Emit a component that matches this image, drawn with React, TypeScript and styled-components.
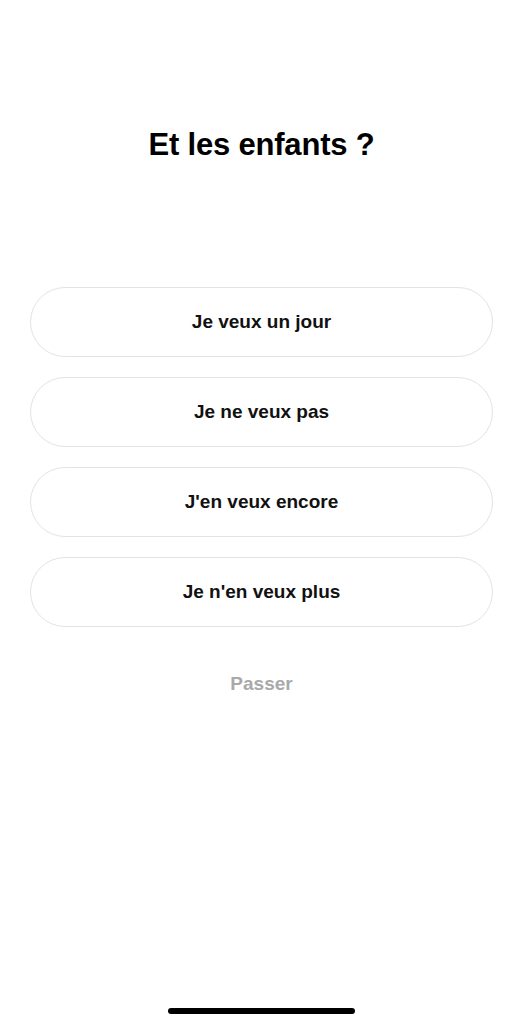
import React from "react";
import styled, { createGlobalStyle } from "styled-components";

const Global = createGlobalStyle`
  html, body { margin: 0; padding: 0; background: #ffffff; }
  body { font-family: "Liberation Sans", Arial, sans-serif; -webkit-font-smoothing: antialiased; }
`;

const Screen = styled.div`
  width: 523px;
  height: 1024px;
  background: #ffffff;
  display: flex;
  flex-direction: column;
  align-items: center;
  box-sizing: border-box;
  padding-top: 126px;
`;

const Title = styled.h1`
  margin: 0;
  font-family: "Liberation Sans", Arial, sans-serif;
  font-size: 31px;
  font-weight: 700;
  line-height: 38px;
  color: #000;
  letter-spacing: -0.2px;
`;

const Options = styled.div`
  margin-top: 123px;
  width: 463px;
  display: flex;
  flex-direction: column;
  gap: 20px;
`;

const Option = styled.button`
  height: 70px;
  width: 100%;
  box-sizing: border-box;
  border: 1.5px solid #e3e3e3;
  border-radius: 35px;
  background: #ffffff;
  font-family: "Liberation Sans", Arial, sans-serif;
  font-size: 19px;
  font-weight: 700;
  color: #111;
  padding: 0;
  cursor: pointer;
`;

const Skip = styled.button`
  margin-top: 45px;
  border: none;
  background: none;
  padding: 0;
  font-family: "Liberation Sans", Arial, sans-serif;
  font-size: 19px;
  font-weight: 700;
  color: #a9a9a9;
  line-height: 24px;
`;

const Spacer = styled.div`
  flex: 1;
`;

const HomeIndicator = styled.div`
  width: 187px;
  height: 6px;
  border-radius: 3px;
  background: #000;
  margin-bottom: 10px;
`;

const options = ["Je veux un jour", "Je ne veux pas", "J'en veux encore", "Je n'en veux plus"];

export default function App() {
  return (
    <>
      <Global />
      <Screen>
        <Title>Et les enfants ?</Title>
        <Options>
          {options.map((o) => (
            <Option key={o}>{o}</Option>
          ))}
        </Options>
        <Skip>Passer</Skip>
        <Spacer />
        <HomeIndicator />
      </Screen>
    </>
  );
}
